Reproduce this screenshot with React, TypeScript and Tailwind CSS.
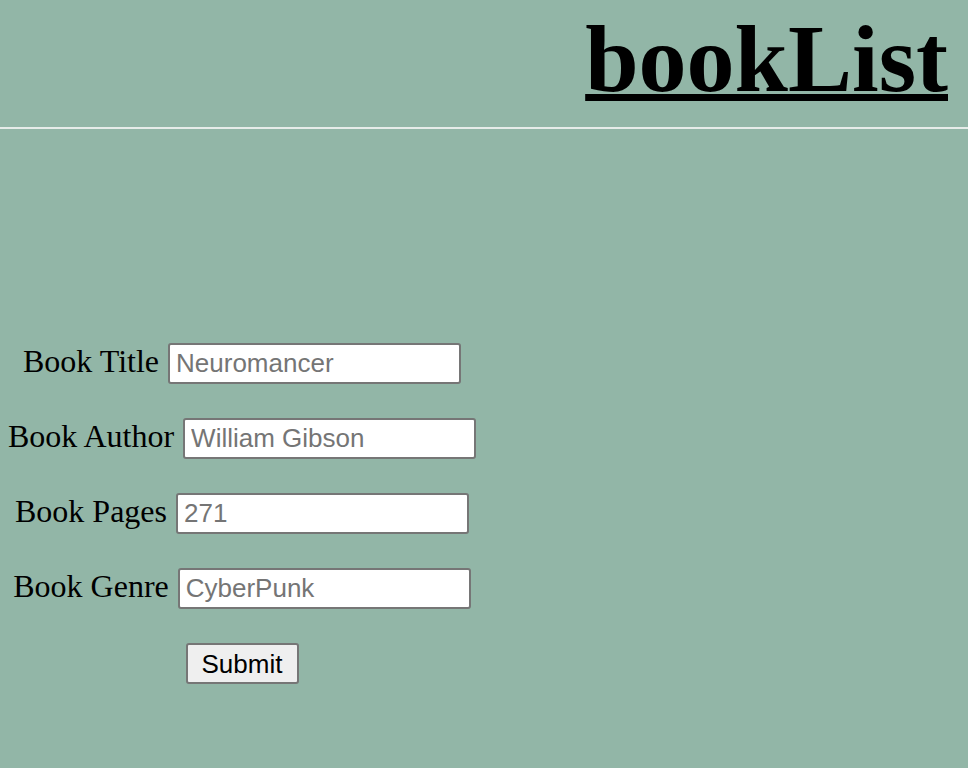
import React from 'react';

const fields = [
  { label: 'Book Title', placeholder: 'Neuromancer' },
  { label: 'Book Author', placeholder: 'William Gibson' },
  { label: 'Book Pages', placeholder: '271' },
  { label: 'Book Genre', placeholder: 'CyberPunk' },
];

export default function App() {
  return (
    <div className="min-h-[768px] bg-[#92b6a7] font-['Liberation_Serif',serif] text-black">
      <header className="h-[129px] border-b-2 border-[#e6ece9] pt-[4px] pr-[20px] text-right">
        <h1 className="text-[96px] font-bold leading-[110px] underline decoration-[7px] underline-offset-[3px]">bookList</h1>
      </header>
      <form className="w-[484px] pt-[214px] flex flex-col items-center gap-[34px]">
        {fields.map(f => (
          <div key={f.label} className="flex items-start h-[41px] gap-[9px]">
            <label className="text-[32px] leading-[37px]">{f.label}</label>
            <input
              placeholder={f.placeholder}
              className="w-[293px] h-[41px] bg-white border-2 border-[#767676] rounded-[3px] px-[6px] text-[26px] font-['Liberation_Sans',sans-serif] placeholder:text-[#757575]"
            />
          </div>
        ))}
        <button type="button" className="w-[113px] h-[41px] bg-[#efefef] border-2 border-[#767676] rounded-[3px] text-[26px] font-['Liberation_Sans',sans-serif]">
          Submit
        </button>
      </form>
    </div>
  );
}
